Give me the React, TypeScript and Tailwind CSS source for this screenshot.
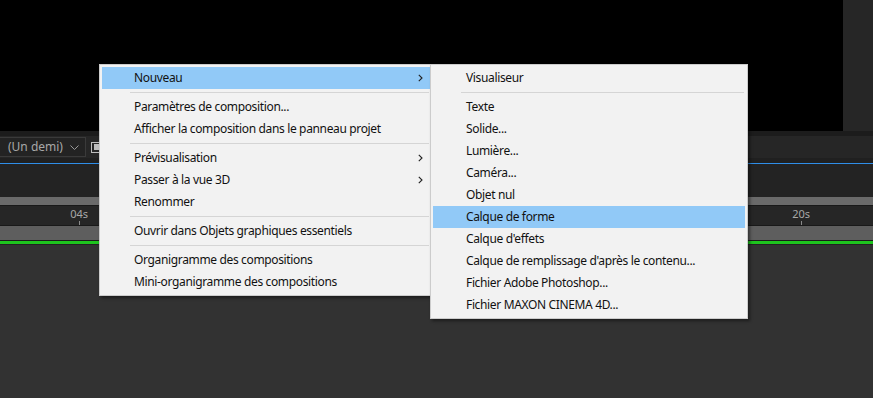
import React from 'react';

type Entry = { label: string; sub?: boolean; active?: boolean } | 'sep';

const MAIN_MENU: Entry[] = [
  { label: 'Nouveau', sub: true, active: true },
  'sep',
  { label: 'Paramètres de composition...' },
  { label: 'Afficher la composition dans le panneau projet' },
  'sep',
  { label: 'Prévisualisation', sub: true },
  { label: 'Passer à la vue 3D', sub: true },
  { label: 'Renommer' },
  'sep',
  { label: 'Ouvrir dans Objets graphiques essentiels' },
  'sep',
  { label: 'Organigramme des compositions' },
  { label: 'Mini-organigramme des compositions' },
];

const NEW_MENU: Entry[] = [
  { label: 'Visualiseur' },
  'sep',
  { label: 'Texte' },
  { label: 'Solide...' },
  { label: 'Lumière...' },
  { label: 'Caméra...' },
  { label: 'Objet nul' },
  { label: 'Calque de forme', active: true },
  { label: "Calque d'effets" },
  { label: "Calque de remplissage d'après le contenu..." },
  { label: 'Fichier Adobe Photoshop...' },
  { label: 'Fichier MAXON CINEMA 4D...' },
];

const Chevron = () => (
  <svg width="5" height="8" viewBox="0 0 5 8" className="shrink-0">
    <path d="M0.8 0.8 L4 4 L0.8 7.2" fill="none" stroke="#222" strokeWidth="1.1" />
  </svg>
);

const MenuList = ({ items, textPad }: { items: Entry[]; textPad: string }) => (
  <div className="flex flex-col">
    {items.map((it, i) =>
      it === 'sep' ? (
        <div key={i} className="h-[7px] flex items-center pl-[28px] pr-[1px]">
          <div className="h-px w-full bg-[#d5d5d5]" />
        </div>
      ) : (
        <div
          key={i}
          className={`h-[22px] flex items-center pr-[7px] ${textPad} text-[12px] tracking-[-0.35px] text-[#111] ${
            it.active ? 'bg-[#91c9f7]' : ''
          }`}
        >
          <span className="flex-1 whitespace-nowrap">{it.label}</span>
          {it.sub && <Chevron />}
        </div>
      )
    )}
  </div>
);

export default function App() {
  return (
    <div
      className="relative w-[873px] h-[398px] overflow-hidden bg-[#323232] flex flex-col"
      style={{ fontFamily: '"Noto Sans", "Liberation Sans", sans-serif' }}
    >
      {/* viewer */}
      <div className="h-[131px] flex">
        <div className="w-[843px] bg-black" />
        <div className="flex-1 bg-[#262626]" />
      </div>
      <div className="h-[5px] bg-[#1c1c1c]" />
      {/* toolbar */}
      <div className="h-[22px] bg-[#262626] flex items-center">
        <div className="h-[20px] w-[87px] -ml-px shrink-0 border border-[#3a3a3a] bg-[#232323] flex items-center pl-[8px] pr-[6px] text-[12px] text-[#a8a8a8] whitespace-nowrap">
          <span className="flex-1">(Un demi)</span>
          <svg width="9" height="5" viewBox="0 0 9 5" className="shrink-0">
            <path d="M0.5 0.5 L4.5 4.5 L8.5 0.5" fill="none" stroke="#9a9a9a" strokeWidth="1" />
          </svg>
        </div>
        <div className="ml-[5px] w-[11px] h-[11px] border border-[#bdbdbd] flex items-center justify-center">
          <div className="w-[6px] h-[6px] bg-[#bdbdbd]" />
        </div>
      </div>
      <div className="h-[5px] bg-[#202020]" />
      <div className="h-px bg-[#2f8ee8]" />
      <div className="h-[33px] bg-[#232323]" />
      <div className="h-[8px] bg-[#6a6a6a]" />
      <div className="h-px bg-[#191919]" />
      {/* ruler */}
      <div className="h-[19px] bg-[#262626] flex items-end text-[11px] text-[#a8a8a8]">
        <div className="w-[80px] flex flex-col items-end">
          <span className="leading-[14px] -mr-[8px]">04s</span>
          <div className="w-px h-[4px] bg-[#8a8a8a]" />
        </div>
        <div className="w-[722px] flex flex-col items-end">
          <span className="leading-[14px] -mr-[8px]">20s</span>
          <div className="w-px h-[4px] bg-[#8a8a8a]" />
        </div>
      </div>
      <div className="h-px bg-[#191919]" />
      <div className="h-[14px] bg-[#5e5e5e]" />
      <div className="h-px bg-[#1b1b1b]" />
      <div className="h-[3px] bg-[#1ec41e]" />
      <div className="h-px bg-[#222]" />
      <div className="flex-1 bg-[#323232]" />

      {/* context menu */}
      <div className="absolute left-[99px] top-[64px] w-[334px] bg-[#f2f2f2] border border-[#cccccc] p-[2px] shadow-[2px_2px_3px_rgba(0,0,0,0.45)]">
        <MenuList items={MAIN_MENU} textPad="pl-[32px]" />
      </div>
      {/* submenu */}
      <div className="absolute left-[430px] top-[64px] w-[318px] bg-[#f2f2f2] border border-[#cccccc] p-[2px] shadow-[2px_2px_3px_rgba(0,0,0,0.45)]">
        <MenuList items={NEW_MENU} textPad="pl-[33px]" />
      </div>
    </div>
  );
}
